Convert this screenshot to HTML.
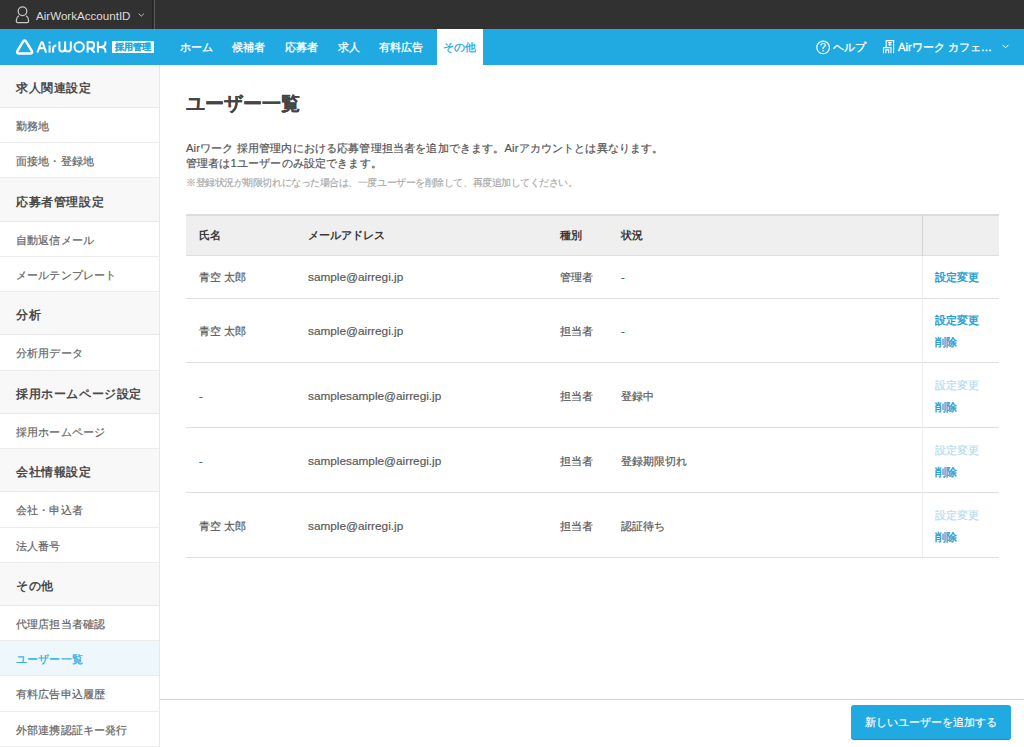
<!DOCTYPE html>
<html lang="ja">
<head>
<meta charset="utf-8">
<style>
*{box-sizing:border-box;margin:0;padding:0}
html,body{width:1024px;height:747px;overflow:hidden;background:#fff}
body{position:relative;font-family:"Liberation Sans",sans-serif;color:#444;font-size:11.2px}
.abs{position:absolute;white-space:nowrap}
#top{position:absolute;left:0;top:0;width:1024px;height:29px;background:#313131}
#nav{position:absolute;left:0;top:29px;width:1024px;height:35.5px;background:#21aae2}
.nt{position:absolute;white-space:nowrap;color:#fff;font-size:11.2px;line-height:20px;-webkit-text-stroke:0.3px currentColor}
#side{position:absolute;left:0;top:64.7px;width:160px;height:683px;border-right:1px solid #e8e8e8;background:#fff}
#side .h{position:relative;height:43.4px;background:#f8f8f8;border-bottom:1px solid #e8e8e8;white-space:nowrap}
#side .i{position:relative;height:35.15px;border-bottom:1px solid #ececec;white-space:nowrap}
#side .h span{position:absolute;left:16px;top:13.3px;line-height:20px;font-size:12.3px;letter-spacing:0.6px;font-weight:bold;color:#4a4a4a}
#side .i span{position:absolute;left:16px;top:8px;line-height:20px;font-size:11.2px;letter-spacing:0.15px;color:#666;-webkit-text-stroke:0.2px currentColor}
#side .i.on{background:#eef7fc}
#side .i.on span{color:#21aae2}
#title{left:186px;top:91.5px;font-size:19.2px;font-weight:bold;color:#444;line-height:24px;-webkit-text-stroke:0.12px currentColor}
.desc{left:186px;font-size:11.2px;letter-spacing:0.15px;color:#555;line-height:15px;-webkit-text-stroke:0.2px currentColor}
.note{left:186px;top:177px;font-size:10px;letter-spacing:-0.45px;color:#a8a8a8;line-height:12px;-webkit-text-stroke:0.15px currentColor}
.tx{line-height:20px;font-size:11.2px;color:#5a5a5a;-webkit-text-stroke:0.2px currentColor}
.th{font-weight:bold;color:#3a3a3a;-webkit-text-stroke:0}
.em{font-size:11.8px}
.lnk{color:#1e9dd3;-webkit-text-stroke:0.4px currentColor}
.dis{color:#b5dcef}
#foot{position:absolute;left:160px;top:698.5px;width:864px;height:49px;border-top:1.5px solid #d2d2d2;background:#fff}
#btn{position:absolute;left:851px;top:705px;width:160px;height:35px;background:#21aae2;border-radius:3px;border-bottom:1.5px solid #1a8fc0;color:#fff;font-size:11.2px;text-align:center;line-height:34px;-webkit-text-stroke:0.15px currentColor}
</style>
</head>
<body>

<div id="top">
  <svg class="abs" style="left:0;top:0" width="40" height="29" viewBox="0 0 40 29">
    <circle cx="22.5" cy="11.2" r="4.3" fill="none" stroke="#c9c9c9" stroke-width="1.25"/>
    <path d="M18.9 15.7 Q16.4 17.1 16.4 20 V21.4 Q16.4 22.6 17.6 22.6 H27.3 Q28.5 22.6 28.5 21.4 V20 Q28.5 17.1 26.1 15.7" fill="none" stroke="#c9c9c9" stroke-width="1.25"/>
  </svg>
  <div class="abs" style="left:36px;top:0.7px;line-height:29px;font-size:11.6px;color:#ddd">AirWorkAccountID</div>
  <svg class="abs" style="left:138px;top:13.2px" width="7" height="5" viewBox="0 0 7 5"><path d="M0.7 0.7 L3.3 3.1 L5.9 0.7" fill="none" stroke="#bbb" stroke-width="1"/></svg>
  <div class="abs" style="left:152px;top:0;width:1px;height:29px;background:#222"></div>
  <div class="abs" style="left:154px;top:0;width:1px;height:29px;background:#5a5a5a"></div>
</div>
<div id="nav">

<svg class="abs" style="left:0;top:0" width="160" height="35" viewBox="0 29 160 35">
 <g fill="none" stroke="#fff" stroke-width="2.5" stroke-linejoin="round"><path d="M26.45 42.09 Q24.60 39.00 22.75 42.09 L17.75 50.46 Q15.90 53.55 19.50 53.55 L29.70 53.55 Q33.30 53.55 31.45 50.46 Z"/></g>
 <g fill="none" stroke="#fff" stroke-width="2" stroke-linecap="butt" stroke-linejoin="round">
  <path d="M37.3 52.6 L41.1 43.0 Q42 41.0 42.9 43.0 L46.1 52.6 M39.0 48.3 H44.6"/>
  <path d="M49.6 45.4 V52.6"/>
  <path d="M53.1 52.6 V48.8 Q53.1 45.5 56.3 45.4"/>
  <path d="M59.4 41.4 V48.6 Q59.4 51.5 62.25 51.5 Q65.1 51.5 65.1 48.6 V41.4 M65.1 48.6 Q65.1 51.5 67.95 51.5 Q70.8 51.5 70.8 48.6 V41.4"/>
  <circle cx="79.15" cy="47.05" r="4.7"/>
  <path d="M87.6 52.6 V42.1 H91.2 Q94.1 42.1 94.1 45.3 Q94.1 48.5 91.2 48.5 H87.6 M91.0 48.5 L94.6 52.6"/>
  <path d="M97.9 41.4 V52.6 M105.4 41.4 V43.2 Q105.4 47 99.2 47 Q105.4 47 105.4 50.8 V52.6"/>
 </g>
 <circle cx="49.6" cy="42.6" r="1.15" fill="#fff"/>
</svg>
<div class="abs" style="left:112px;top:12.1px;width:41.7px;height:11.8px;border-radius:1px;background:#fff;color:#21aae2;font-size:8.8px;letter-spacing:-0.1px;font-weight:bold;line-height:13.2px;text-align:center;overflow:hidden;-webkit-text-stroke:0.15px #21aae2">採用管理</div>
<div class="nt" style="left:180px;top:7.5px">ホーム</div>
<div class="nt" style="left:232px;top:7.5px">候補者</div>
<div class="nt" style="left:285px;top:7.5px">応募者</div>
<div class="nt" style="left:338px;top:7.5px">求人</div>
<div class="nt" style="left:379px;top:7.5px">有料広告</div>
<div class="abs" style="left:437px;top:0;width:46px;height:36px;background:#fff"></div>
<div class="nt" style="left:443px;top:7.5px;color:#21aae2">その他</div>

  <svg class="abs" style="left:800px;top:0" width="100" height="35" viewBox="800 29 100 35">
    <circle cx="823.1" cy="47.45" r="6.3" fill="none" stroke="#fff" stroke-width="1.2"/>
    <path d="M820.9 45.4 Q820.9 43.5 823.1 43.5 Q825.3 43.5 825.3 45.3 Q825.3 46.6 823.1 47.5 V48.9" fill="none" stroke="#fff" stroke-width="1.2"/>
    <circle cx="823.1" cy="50.7" r="0.8" fill="#fff"/>
    <g fill="none" stroke="#fff" stroke-width="1.1">
      <path d="M886.2 47.3 V40.6 H893.6 V53.2"/>
      <path d="M883.5 53.2 V47.6 H891 V53.2"/>
      <path d="M885.8 53.2 V49.9 H888.7 V53.2"/>
      <path d="M888.2 42.6 H891.6 M888.2 44.8 H891.6 M889.9 42.6 V46"/>
    </g>
  </svg>
  <div class="nt" style="left:833px;top:7.5px">ヘルプ</div>
  <div class="nt" style="left:898px;top:7.5px">Airワーク カフェ…</div>
  <svg class="abs" style="left:1002px;top:15px" width="7" height="5" viewBox="0 0 7 5"><path d="M0.5 0.8 L3.5 3.8 L6.5 0.8" fill="none" stroke="#fff" stroke-width="1"/></svg>
</div>
<div id="side">
<div class="h"><span>求人関連設定</span></div>
<div class="i"><span>勤務地</span></div>
<div class="i"><span>面接地・登録地</span></div>
<div class="h"><span>応募者管理設定</span></div>
<div class="i"><span>自動返信メール</span></div>
<div class="i"><span>メールテンプレート</span></div>
<div class="h"><span>分析</span></div>
<div class="i"><span>分析用データ</span></div>
<div class="h"><span>採用ホームページ設定</span></div>
<div class="i"><span>採用ホームページ</span></div>
<div class="h"><span>会社情報設定</span></div>
<div class="i"><span>会社・申込者</span></div>
<div class="i"><span>法人番号</span></div>
<div class="h"><span>その他</span></div>
<div class="i"><span>代理店担当者確認</span></div>
<div class="i on"><span>ユーザー一覧</span></div>
<div class="i"><span>有料広告申込履歴</span></div>
<div class="i"><span>外部連携認証キー発行</span></div>
</div>

<div id="title" class="abs">ユーザー一覧</div>
<div class="abs desc" style="top:140.5px">Airワーク 採用管理内における応募管理担当者を追加できます。Airアカウントとは異なります。</div>
<div class="abs desc" style="top:155.5px">管理者は1ユーザーのみ設定できます。</div>
<div class="abs note">※登録状況が期限切れになった場合は、一度ユーザーを削除して、再度追加してください。</div>
<div class="abs" style="left:185.5px;top:214px;width:813px;height:41.5px;background:#efefef"></div>
<div class="abs" style="left:185.5px;top:214px;width:813px;height:1.6px;background:#dcdcdc"></div>
<div class="abs" style="left:185.5px;top:254.60px;width:813px;height:1.3px;background:#dedede"></div>
<div class="abs" style="left:185.5px;top:297.50px;width:813px;height:1.3px;background:#dedede"></div>
<div class="abs" style="left:185.5px;top:362.20px;width:813px;height:1.3px;background:#dedede"></div>
<div class="abs" style="left:185.5px;top:427.10px;width:813px;height:1.3px;background:#dedede"></div>
<div class="abs" style="left:185.5px;top:492.10px;width:813px;height:1.3px;background:#dedede"></div>
<div class="abs" style="left:185.5px;top:557.20px;width:813px;height:1.3px;background:#dedede"></div>
<div class="abs" style="left:922px;top:215px;width:1px;height:40.5px;background:#d2d2d2"></div>
<div class="abs" style="left:922px;top:256px;width:1px;height:301px;background:#eeeeee"></div>
<div class="abs tx th" style="left:199px;top:225.35px">氏名</div>
<div class="abs tx th" style="left:308px;top:225.35px">メールアドレス</div>
<div class="abs tx th" style="left:560px;top:225.35px">種別</div>
<div class="abs tx th" style="left:621px;top:225.35px">状況</div>
<div class="abs tx " style="left:199px;top:267.45px">青空 太郎</div>
<div class="abs tx em" style="left:308px;top:267.45px">sample@airregi.jp</div>
<div class="abs tx " style="left:560px;top:267.45px">管理者</div>
<div class="abs tx " style="left:621px;top:267.45px">-</div>
<div class="abs tx lnk" style="left:934.5px;top:267.45px">設定変更</div>
<div class="abs tx " style="left:199px;top:321.25px">青空 太郎</div>
<div class="abs tx em" style="left:308px;top:321.25px">sample@airregi.jp</div>
<div class="abs tx " style="left:560px;top:321.25px">担当者</div>
<div class="abs tx " style="left:621px;top:321.25px">-</div>
<div class="abs tx lnk" style="left:934.5px;top:310.15px">設定変更</div>
<div class="abs tx lnk" style="left:934.5px;top:332.35px">削除</div>
<div class="abs tx " style="left:199px;top:386.05px">-</div>
<div class="abs tx em" style="left:308px;top:386.05px">samplesample@airregi.jp</div>
<div class="abs tx " style="left:560px;top:386.05px">担当者</div>
<div class="abs tx " style="left:621px;top:386.05px">登録中</div>
<div class="abs tx dis" style="left:934.5px;top:374.95px">設定変更</div>
<div class="abs tx lnk" style="left:934.5px;top:397.15px">削除</div>
<div class="abs tx " style="left:199px;top:451.00px">-</div>
<div class="abs tx em" style="left:308px;top:451.00px">samplesample@airregi.jp</div>
<div class="abs tx " style="left:560px;top:451.00px">担当者</div>
<div class="abs tx " style="left:621px;top:451.00px">登録期限切れ</div>
<div class="abs tx dis" style="left:934.5px;top:439.90px">設定変更</div>
<div class="abs tx lnk" style="left:934.5px;top:462.10px">削除</div>
<div class="abs tx " style="left:199px;top:516.05px">青空 太郎</div>
<div class="abs tx em" style="left:308px;top:516.05px">sample@airregi.jp</div>
<div class="abs tx " style="left:560px;top:516.05px">担当者</div>
<div class="abs tx " style="left:621px;top:516.05px">認証待ち</div>
<div class="abs tx dis" style="left:934.5px;top:504.95px">設定変更</div>
<div class="abs tx lnk" style="left:934.5px;top:527.15px">削除</div>
<div id="foot"></div>
<div id="btn">新しいユーザーを追加する</div>
</body>
</html>
